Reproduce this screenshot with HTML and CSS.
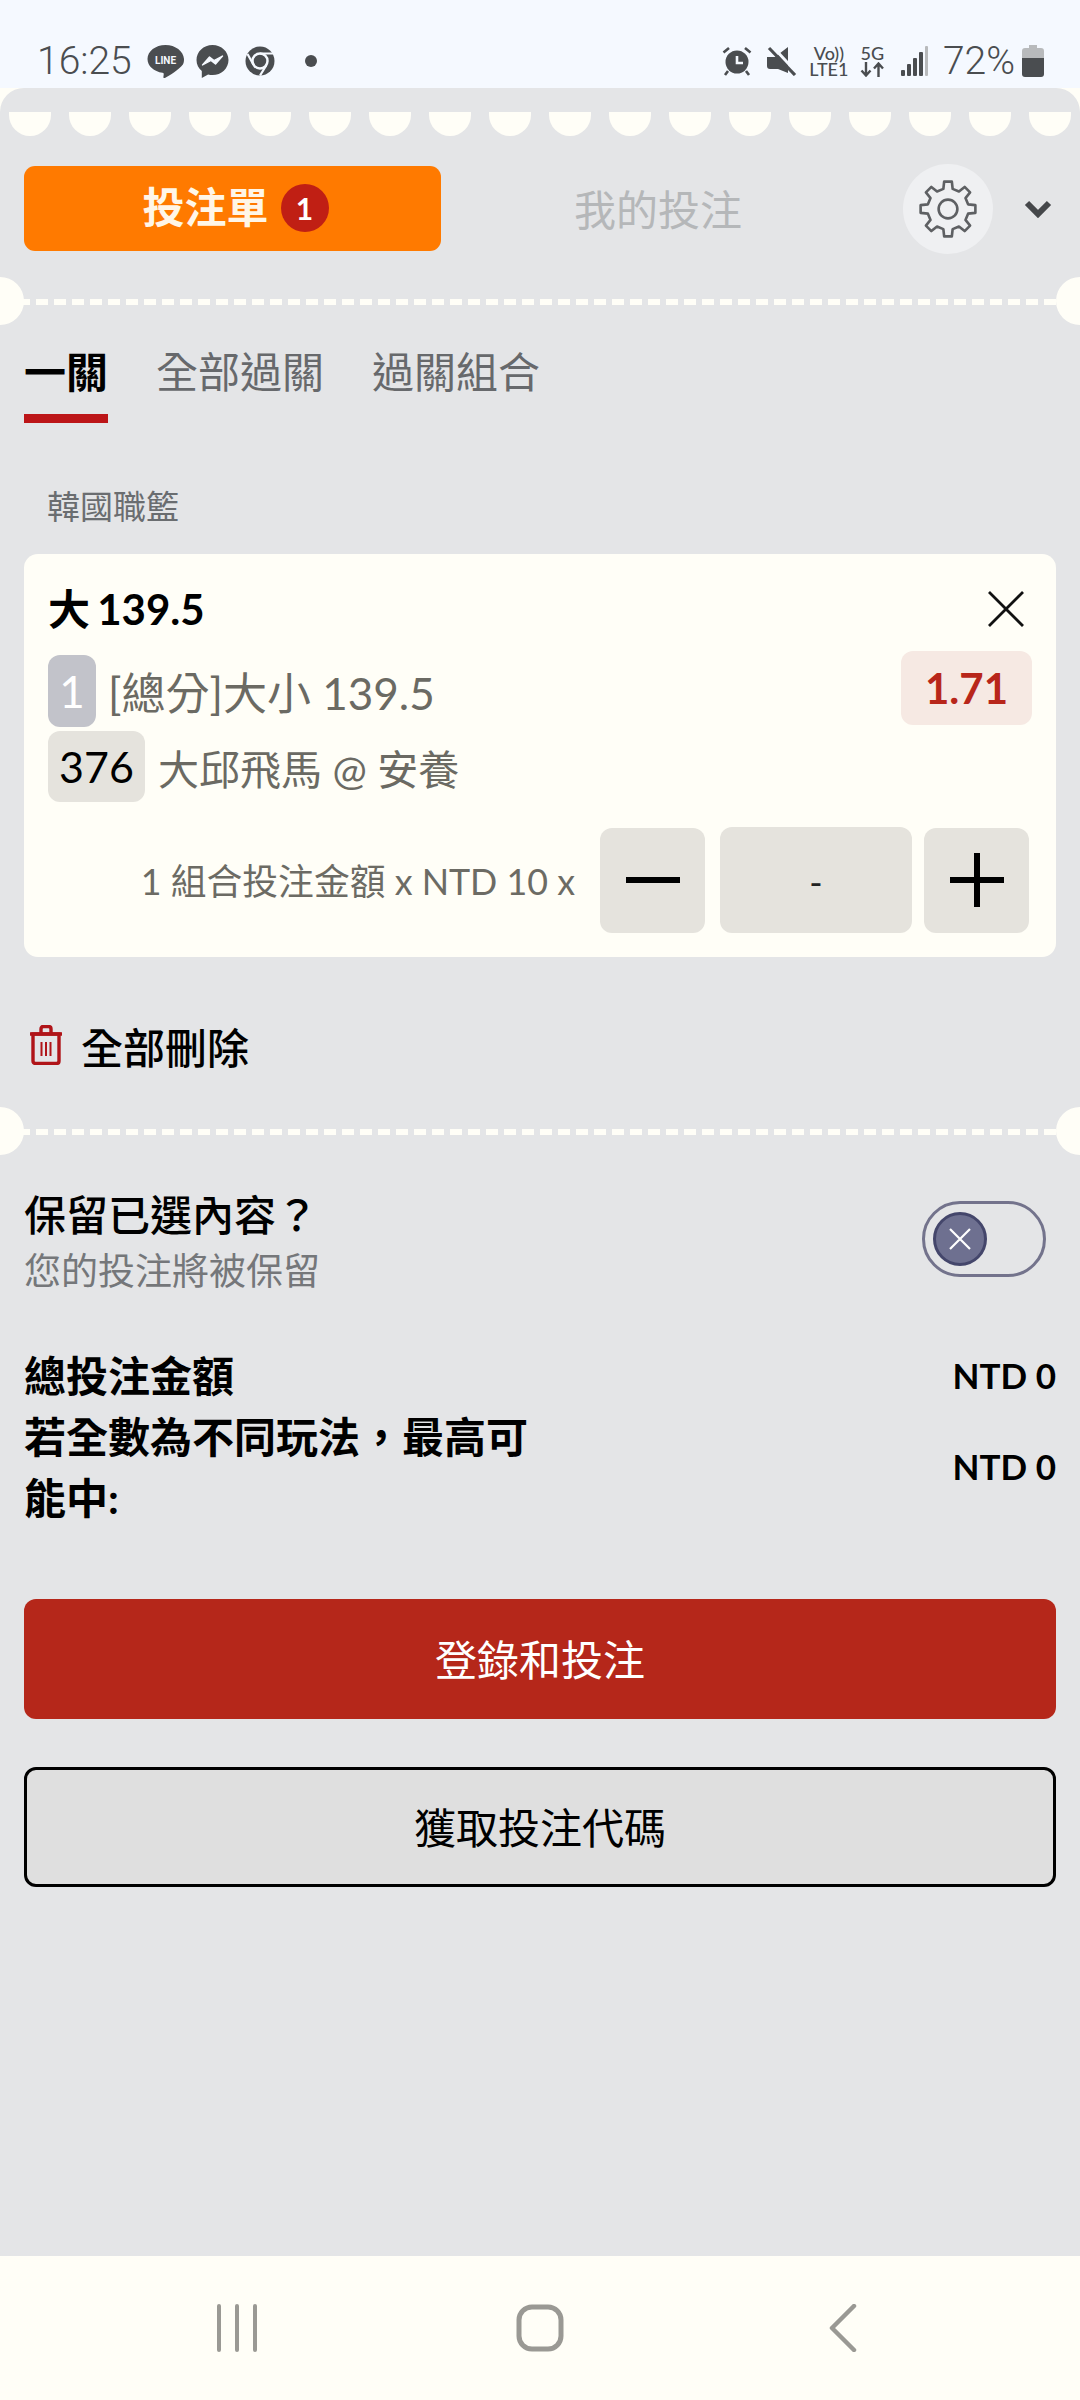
FILE: index.html
```html
<!DOCTYPE html>
<html lang="zh-Hant">
<head>
    <meta charset="UTF-8">
    <meta name="viewport" content="width=device-width, initial-scale=1.0">
    <title>投注單</title>
    <link rel="stylesheet" href="styles.css">
</head>
<body>
    <!-- Phone status bar -->
    <header class="status-bar">
        <div class="status-left">
            <span class="status-time">16:25</span>
            <svg class="icon-line" viewBox="0 0 37 35">
                <path d="M18.5 1C8.5 1 .5 7.300 .5 15c0 7 6.500 12.600 15 13.800 1 .2 1.400 .7 1.200 1.700l-.3 2.500c-.1 1 .5 1.400 1.500 .9 4-2 14-8.300 18-13.500 .9-1.500 1.100-3.400 1.100-5.400C36.500 7.300 28.500 1 18.500 1z" fill="#4a4d50"/>
                <text x="18.500" y="19.500" text-anchor="middle" class="line-text">LINE</text>
            </svg>
            <svg class="icon-messenger" viewBox="0 0 33 35">
                <path d="M16.500 1C7.500 1 .5 7.700 .5 16c0 4.500 2 8.400 5.300 11v7l6.300-3.500c1.400 .4 2.900 .6 4.400 .6 9 0 16-6.800 16-15.100S25.500 1 16.500 1z" fill="#4a4d50"/>
                <path d="M6.500 21l7-8 4.500 3.500 8.500-4.500-7 8-4.500-3.500z" fill="#f5f9ff" stroke="#f5f9ff" stroke-width="1.400" stroke-linejoin="round"/>
            </svg>
            <svg class="icon-chrome" viewBox="0 0 30 30">
                <circle cx="15" cy="15" r="14.500" fill="#4a4d50"/>
                <circle cx="15" cy="15" r="7.500" fill="#4a4d50" stroke="#f5f9ff" stroke-width="2.500"/>
                <path d="M15 7.500h13M8.500 18.800L2.500 8M21.500 19l-6.500 10.500" stroke="#f5f9ff" stroke-width="2.200" fill="none"/>
            </svg>
            <span class="status-dot"></span>
        </div>
        <div class="status-right">
            <svg class="icon-alarm" viewBox="0 0 30 30">
                <circle cx="15" cy="16" r="11.500" fill="#4a4d50"/>
                <path d="M15 10v7h6" stroke="#f5f9ff" stroke-width="2.600" fill="none"/>
                <path d="M1.500 6.500L7 2M28.500 6.500L23 2M6 25l-3 4M24 25l3 4" stroke="#4a4d50" stroke-width="2.600" fill="none"/>
            </svg>
            <svg class="icon-mute" viewBox="0 0 30 30">
                <path d="M0 11h8L21 1v26L11 23H3q-3 0-3-3z" fill="#4a4d50"/>
                <path d="M5 0l25 27" stroke="#f5f9ff" stroke-width="3"/>
                <path d="M2 2l26 27" stroke="#4a4d50" stroke-width="3.200"/>
            </svg>
            <div class="net-label">
                <span class="net-top">Vo))</span>
                <span class="net-bottom">LTE1</span>
            </div>
            <div class="net-label net-5g">
                <span class="net-top">5G</span>
                <svg class="icon-arrows" viewBox="0 0 25 15">
                    <path d="M6 0v13M1.500 8.500L6 13.500l4.500-5M18.500 15V2M14 6.500L18.500 1.500 23 6.500" stroke="#4a4d50" stroke-width="2.400" fill="none"/>
                </svg>
            </div>
            <svg class="icon-signal" viewBox="0 0 27 30">
                <rect x="0" y="24" width="4" height="6" rx="1" fill="#4a4d50"/>
                <rect x="6" y="18" width="4" height="12" rx="1" fill="#4a4d50"/>
                <rect x="12" y="12" width="4" height="18" rx="1" fill="#4a4d50"/>
                <rect x="18" y="6" width="4" height="24" rx="1" fill="#4a4d50"/>
                <rect x="24" y="0" width="3" height="30" rx="1" fill="#b8babc"/>
            </svg>
            <span class="status-battery-text">72%</span>
            <svg class="icon-battery" viewBox="0 0 22 32">
                <path d="M7 0h8v3h4q3 0 3 3v10H0V6q0-3 3-3h4z" fill="#b8babc"/>
                <path d="M0 13h22v16q0 3-3 3H3q-3 0-3-3z" fill="#4a4d50"/>
            </svg>
        </div>
    </header>

    <main class="panel">
        <div class="scallops">
            <span></span><span></span><span></span><span></span><span></span><span></span>
            <span></span><span></span><span></span><span></span><span></span><span></span>
            <span></span><span></span><span></span><span></span><span></span><span></span>
        </div>

        <div class="head-row">
            <button class="slip-tab"><span class="slip-text">投注單</span><span class="slip-count">1</span></button>
            <span class="my-bets">我的投注</span>
            <button class="settings-btn">
                <svg viewBox="0 0 64 64" class="icon-gear">
                    <polygon points="27.05,10.57 27.9,2.8 36.1,2.8 36.95,10.57 43.66,13.34 49.76,8.44 55.56,14.24 50.66,20.34 53.43,27.05 61.2,27.9 61.2,36.1 53.43,36.95 50.66,43.66 55.56,49.76 49.76,55.56 43.66,50.66 36.95,53.43 36.1,61.2 27.9,61.2 27.05,53.43 20.34,50.66 14.24,55.56 8.44,49.76 13.34,43.66 10.57,36.95 2.8,36.1 2.8,27.9 10.57,27.05 13.34,20.34 8.44,14.24 14.24,8.44 20.34,13.34"/>
                    <circle cx="32" cy="32" r="10"/>
                </svg>
            </button>
            <svg class="icon-chevron" viewBox="0 0 28 18">
                <path d="M3 3l11 11L25 3" fill="none" stroke="#45474a" stroke-width="6"/>
            </svg>
        </div>

        <div class="ticket-divider"></div>

        <nav class="bet-tabs">
            <span class="bet-tab active">一關</span>
            <span class="bet-tab">全部過關</span>
            <span class="bet-tab">過關組合</span>
        </nav>

        <div class="league-name">韓國職籃</div>

        <section class="bet-card">
            <div class="bet-title-row">
                <span class="bet-title">大 139.5</span>
                <svg class="icon-close" viewBox="0 0 36 36">
                    <path d="M1 1l34 34M35 1L1 35" stroke="#111" stroke-width="2.800"/>
                </svg>
            </div>
            <div class="bet-row">
                <span class="leg-badge">1</span>
                <span class="bet-text market">[總分]大小 139.5</span>
                <span class="odds">1.71</span>
            </div>
            <div class="bet-row second">
                <span class="game-badge">376</span>
                <span class="bet-text">大邱飛馬 @ 安養</span>
            </div>
            <div class="stake-row">
                <span class="stake-label">1 組合投注金額 x NTD 10 x</span>
                <button class="step-btn">
                    <svg viewBox="0 0 54 54" class="icon-step"><path d="M0 27h54" stroke="#000" stroke-width="6"/></svg>
                </button>
                <div class="stake-value">-</div>
                <button class="step-btn">
                    <svg viewBox="0 0 54 54" class="icon-step"><path d="M0 27h54M27 0v54" stroke="#000" stroke-width="6"/></svg>
                </button>
            </div>
        </section>

        <div class="delete-all">
            <svg class="icon-trash" viewBox="0 0 34 40">
                <path d="M1 9h32M12 8V4q0-2.500 2.500-2.500h5Q22 1.500 22 4v4" fill="none" stroke="#b01419" stroke-width="3.400"/>
                <path d="M4 9h26v27q0 2.500-2.500 2.500h-21Q4 38.500 4 36z" fill="none" stroke="#b01419" stroke-width="3.400"/>
                <path d="M12.500 17v14M17 17v14M21.500 17v14" stroke="#b01419" stroke-width="2"/>
            </svg>
            <span>全部刪除</span>
        </div>

        <div class="ticket-divider second"></div>

        <div class="keep-row">
            <div>
                <div class="keep-title">保留已選內容？</div>
                <div class="keep-sub">您的投注將被保留</div>
            </div>
            <div class="toggle">
                <span class="toggle-knob">
                    <svg viewBox="0 0 24 24" class="icon-knob"><path d="M2 2l20 20M22 2L2 22" stroke="#fff" stroke-width="2.200"/></svg>
                </span>
            </div>
        </div>

        <div class="total-row">
            <span class="total-label">總投注金額</span>
            <span class="total-value">NTD 0</span>
        </div>
        <div class="total-row">
            <span class="total-label">若全數為不同玩法，最高可能中:</span>
            <span class="total-value">NTD 0</span>
        </div>

        <button class="login-btn">登錄和投注</button>
        <button class="code-btn">獲取投注代碼</button>
    </main>

    <!-- Android nav buttons -->
    <footer class="nav-bar">
        <div class="nav-cell">
            <svg class="icon-recent" viewBox="0 0 44 48">
                <path d="M4 2v44M22 2v44M40 2v44" stroke="#9a9994" stroke-width="4" stroke-linecap="round"/>
            </svg>
        </div>
        <div class="nav-cell">
            <svg class="icon-home" viewBox="0 0 48 48">
                <rect x="3" y="3" width="42" height="42" rx="13" fill="none" stroke="#9a9994" stroke-width="5"/>
            </svg>
        </div>
        <div class="nav-cell">
            <svg class="icon-back" viewBox="0 0 28 48">
                <path d="M25 2L3 24l22 22" fill="none" stroke="#9a9994" stroke-width="4.500" stroke-linecap="round" stroke-linejoin="round"/>
            </svg>
        </div>
    </footer>
</body>
</html>
```

FILE: styles.css
```css
* {
    margin: 0;
    padding: 0;
    box-sizing: border-box;
    font-family: Lato, "Noto Sans CJK TC", sans-serif;
}

body {
    width: 1080px;
    height: 2400px;
    overflow: hidden;
    display: flex;
    flex-direction: column;
    background: #fffef7;
}

button {
    border: none;
    background: none;
}

svg {
    display: block;
    flex: none;
}

/* status bar */
.status-bar {
    height: 88px;
    flex: none;
    display: flex;
    justify-content: space-between;
    align-items: flex-start;
    padding: 44px 36px 0 37px;
    background: #f5f9ff;
    color: #4a4d50;
}

.status-left,
.status-right {
    display: flex;
    align-items: center;
    height: 34px;
}

.status-time {
    font-family: Roboto, sans-serif;
    font-size: 39px;
    font-weight: 300;
    width: 110px;
}

.icon-line { width: 37px; height: 35px; margin-right: 12px; }
.icon-messenger { width: 33px; height: 35px; margin-right: 16px; }
.icon-chrome { width: 30px; height: 30px; margin-right: 30px; }

.line-text {
    font-family: Roboto, sans-serif;
    font-size: 10px;
    font-weight: 700;
    fill: #f5f9ff;
}

.status-dot {
    width: 12px;
    height: 12px;
    border-radius: 50%;
    background: #4a4d50;
}

.icon-alarm { width: 30px; height: 30px; margin-right: 15px; }
.icon-mute { width: 30px; height: 30px; margin-right: 13px; }

.net-label {
    display: flex;
    flex-direction: column;
    align-items: center;
    width: 38px;
    font-family: Roboto, sans-serif;
    font-weight: 500;
    margin-right: 12px;
}

.net-5g {
    width: 25px;
    margin-right: 16px;
}

.net-top {
    font-size: 18px;
    line-height: 16px;
}

.net-bottom {
    font-size: 18px;
    line-height: 16px;
}

.icon-arrows { width: 25px; height: 15px; margin-top: 1px; }
.icon-signal { width: 27px; height: 30px; margin-right: 15px; }

.status-battery-text {
    font-family: Roboto, sans-serif;
    font-size: 39px;
    font-weight: 300;
    margin-right: 7px;
}

.icon-battery { width: 22px; height: 32px; }

/* main panel */
.panel {
    flex: 1;
    background: #e4e5e7;
    border-radius: 24px 24px 0 0;
    padding-top: 24px;
}

.scallops {
    display: flex;
    gap: 18px;
    padding-left: 9px;
}

.scallops span {
    width: 42px;
    height: 24px;
    background: #fffef7;
    border-radius: 0 0 21px 21px;
}

.head-row {
    display: flex;
    align-items: center;
    height: 90px;
    margin-top: 28px;
    padding: 0 28px 0 24px;
}

.slip-tab {
    width: 417px;
    height: 85px;
    margin-bottom: 2px;
    padding-left: 6px;
    display: flex;
    align-items: center;
    justify-content: center;
    gap: 12px;
    background: #ff7a00;
    border-radius: 11px;
    color: #fff6e8;
}

.slip-text {
    font-size: 42px;
    line-height: 50px;
    font-weight: 700;
    margin-bottom: 2px;
}

.slip-count {
    width: 48px;
    height: 48px;
    border-radius: 50%;
    background: #c01f14;
    color: #fff;
    font-size: 30px;
    line-height: 48px;
    font-weight: 700;
}

.my-bets {
    margin-left: 133px;
    margin-bottom: 3px;
    font-size: 42px;
    color: #b5b7b9;
}

.settings-btn {
    width: 90px;
    height: 90px;
    margin-left: auto;
    border-radius: 50%;
    background: #eff0f2;
    display: flex;
    align-items: center;
    justify-content: center;
}

.icon-gear {
    width: 60px;
    height: 60px;
    fill: none;
    stroke: #5e6063;
    stroke-width: 2.800;
    stroke-linejoin: round;
}

.icon-chevron {
    width: 28px;
    height: 18px;
    margin-left: 31px;
}

.ticket-divider {
    position: relative;
    height: 6px;
    margin-top: 45px;
    background: repeating-linear-gradient(90deg, #fffef7 0 12px, transparent 12px 18px);
}

.ticket-divider.second {
    margin-top: 54px;
}

/* half circles cut into the panel edge */
.ticket-divider::before,
.ticket-divider::after {
    content: "";
    position: absolute;
    top: -22px;
    width: 48px;
    height: 48px;
    border-radius: 50%;
    background: #fffef7;
}

.ticket-divider::before { left: -24px; }
.ticket-divider::after { right: -24px; }

.bet-tabs {
    display: flex;
    gap: 48px;
    margin-top: 39px;
    padding-left: 24px;
}

.bet-tab {
    height: 79px;
    line-height: 57px;
    font-size: 42px;
    color: #67696c;
}

.bet-tab.active {
    color: #000;
    font-weight: 700;
    border-bottom: 9px solid #bc1518;
}

.league-name {
    margin-top: 63px;
    padding-left: 47px;
    font-size: 33px;
    line-height: 40px;
    color: #6a6d70;
}

/* bet card */
.bet-card {
    margin: 28px 24px 0;
    padding: 30px 24px 24px;
    background: #fffef7;
    border-radius: 14px;
}

.bet-title-row {
    display: flex;
    justify-content: space-between;
    align-items: center;
    height: 50px;
    margin-bottom: 21px;
}

.bet-title {
    margin-bottom: 6px;
    font-size: 42px;
    font-weight: 700;
    word-spacing: -3px;
    color: #000;
}

.icon-close {
    width: 36px;
    height: 36px;
    margin-right: 8px;
}

.bet-row {
    display: flex;
    align-items: center;
    gap: 13px;
}

.bet-row.second {
    margin-top: 4px;
}

.bet-text {
    font-size: 41px;
    color: #6b6a63;
}

.bet-text.market {
    margin-left: -1px;
    font-size: 44px;
}

.leg-badge {
    width: 48px;
    height: 72px;
    border-radius: 12px;
    background: #c2c3ca;
    color: #fff;
    font-size: 44px;
    line-height: 72px;
    text-align: center;
}

.game-badge {
    width: 97px;
    height: 71px;
    border-radius: 12px;
    background: #e5e3dd;
    color: #000;
    font-size: 43px;
    line-height: 71px;
    text-align: center;
}

.odds {
    width: 131px;
    height: 74px;
    margin-left: auto;
    margin-top: -7px;
    border-radius: 12px;
    background: #f6e9e3;
    color: #b8261a;
    font-size: 42px;
    font-weight: 700;
    line-height: 74px;
    text-align: center;
}

.stake-row {
    display: flex;
    justify-content: flex-end;
    align-items: center;
    margin: 25px 3px 0 0;
}

.stake-label {
    margin-right: 25px;
    margin-bottom: 2px;
    font-size: 35.800px;
    color: #6c6b64;
}

.step-btn {
    width: 105px;
    height: 105px;
    border-radius: 12px;
    background: #e5e3dd;
    display: flex;
    align-items: center;
    justify-content: center;
}

.icon-step {
    width: 54px;
    height: 54px;
}

.stake-value {
    width: 192px;
    height: 106px;
    margin: 0 12px 0 15px;
    border-radius: 12px;
    background: #e5e3dd;
    color: #222;
    font-size: 36px;
    line-height: 110px;
    text-align: center;
}

.delete-all {
    display: flex;
    align-items: center;
    gap: 18px;
    height: 60px;
    margin-top: 58px;
    padding-left: 29px;
    font-size: 42px;
    font-weight: 500;
    color: #000;
}

.icon-trash {
    width: 34px;
    height: 40px;
}

/* keep selection */
.keep-row {
    display: flex;
    justify-content: space-between;
    margin-top: 52px;
    padding: 0 34px 0 24px;
}

.keep-title {
    font-size: 42px;
    line-height: 56px;
    font-weight: 500;
    color: #000;
}

.keep-sub {
    font-size: 37px;
    line-height: 56px;
    color: #75777a;
}

.toggle {
    width: 124px;
    height: 76px;
    margin-top: 14px;
    padding-left: 8px;
    display: flex;
    align-items: center;
    border: 3px solid #73738c;
    border-radius: 38px;
}

.toggle-knob {
    width: 54px;
    height: 54px;
    border-radius: 50%;
    background: #6e7090;
    border: 3px solid #44466b;
    display: flex;
    align-items: center;
    justify-content: center;
}

.icon-knob {
    width: 24px;
    height: 24px;
}

/* totals */
.total-row {
    display: flex;
    justify-content: space-between;
    align-items: center;
    padding: 0 24px;
}

.keep-row + .total-row {
    margin-top: 47px;
}

.total-label {
    width: 520px;
    font-size: 42px;
    line-height: 61px;
    font-weight: 700;
    color: #000;
}

.total-value {
    margin-bottom: 4px;
    font-size: 35px;
    font-weight: 700;
    color: #000;
}

.login-btn,
.code-btn {
    display: block;
    width: 1032px;
    height: 120px;
    margin: 0 24px;
    padding-bottom: 4px;
    font-size: 42px;
    border-radius: 12px;
}

.login-btn {
    margin-top: 70px;
    background: #b5271a;
    color: #fff;
}

.code-btn {
    margin-top: 48px;
    background: #dfdfdf;
    border: 3px solid #000;
    color: #000;
}

/* nav buttons */
.nav-bar {
    height: 144px;
    flex: none;
    display: flex;
    justify-content: center;
    align-items: center;
    background: #fffef7;
}

.nav-cell {
    width: 303px;
    display: flex;
    justify-content: center;
}

.icon-recent { width: 44px; height: 48px; }
.icon-home { width: 48px; height: 48px; }
.icon-back { width: 28px; height: 48px; }
```
